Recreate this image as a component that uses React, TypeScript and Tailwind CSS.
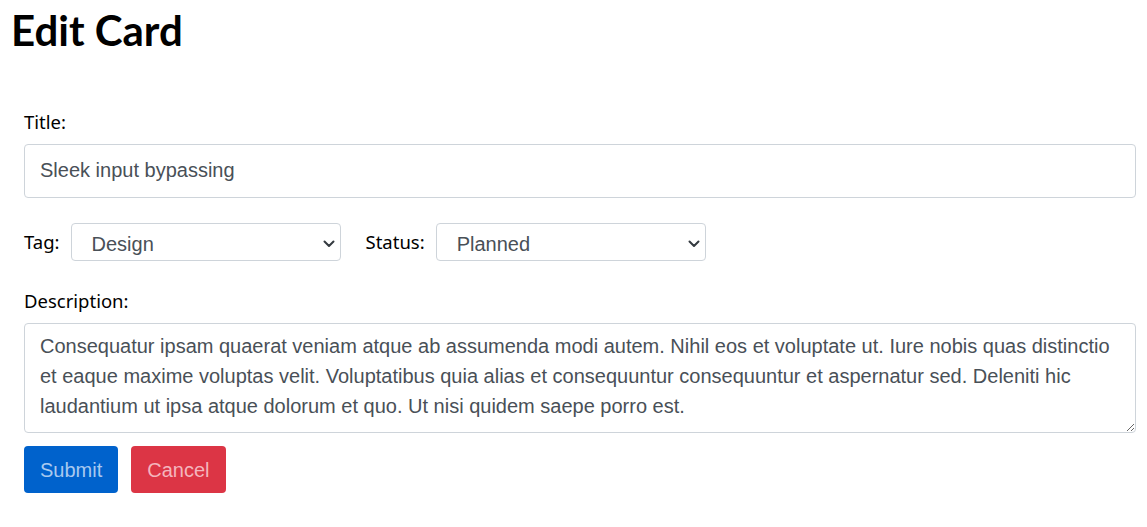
import { useState } from "react";

const labelFont = { fontFamily: '"Noto Sans", "Open Sans", sans-serif' };

function Chevron() {
    return (
        <svg width="12" height="8" viewBox="0 0 12 8" className="pointer-events-none absolute right-[6px] top-[17px]">
            <path d="M1.5 1.5 L6 6 L10.5 1.5" fill="none" stroke="#343a40" strokeWidth="2" strokeLinecap="round" strokeLinejoin="round" />
        </svg>
    );
}

function Select({ value, options, onChange }: { value: string; options: string[]; onChange: (v: string) => void }) {
    return (
        <div className="relative">
            <select
                value={value}
                onChange={e => onChange(e.target.value)}
                className="h-[38px] w-[270px] appearance-none rounded-[4px] border border-[#ced4da] bg-white pb-[1px] pl-[20px] pr-[28px] pt-[5px] text-[20px] leading-[30px] text-[#495057] outline-none font-['Liberation_Sans',Arial,sans-serif]"
            >
                {options.map(o => (
                    <option key={o} value={o}>{o}</option>
                ))}
            </select>
            <Chevron />
        </div>
    );
}

export default function App() {
    const [title, setTitle] = useState("Sleek input bypassing");
    const [tag, setTag] = useState("Design");
    const [status, setStatus] = useState("Planned");
    const [description, setDescription] = useState(
        "Consequatur ipsam quaerat veniam atque ab assumenda modi autem. Nihil eos et voluptate ut. Iure nobis quas distinctio et eaque maxime voluptas velit. Voluptatibus quia alias et consequuntur consequuntur et aspernatur sed. Deleniti hic laudantium ut ipsa atque dolorum et quo. Ut nisi quidem saepe porro est."
    );

    return (
        <div className="min-h-screen bg-white text-black">
            <h1 className="pl-[11px] pt-[4px] text-[42px] font-bold leading-[52px] font-['Lato',sans-serif]">Edit Card</h1>

            <form className="mt-[52px] flex flex-col px-[24px] pr-[11px]" style={labelFont} onSubmit={e => e.preventDefault()}>
                <label className="text-[18.5px] leading-[28px]">Title:</label>
                <input
                    value={title}
                    onChange={e => setTitle(e.target.value)}
                    className="mt-[8px] h-[54px] w-full rounded-[4px] border border-[#ced4da] px-[15px] pb-[2px] text-[20px] text-[#495057] outline-none font-['Liberation_Sans',Arial,sans-serif]"
                />

                <div className="mt-[25px] flex items-center">
                    <label className="mr-[11px] text-[18.5px]">Tag:</label>
                    <Select value={tag} options={["Design", "Feature", "Bug"]} onChange={setTag} />
                    <label className="ml-[25px] mr-[11px] text-[18.5px]">Status:</label>
                    <Select value={status} options={["Planned", "In Progress", "Live"]} onChange={setStatus} />
                </div>

                <label className="mt-[26px] text-[18.5px] leading-[28px]">Description:</label>
                <textarea
                    value={description}
                    onChange={e => setDescription(e.target.value)}
                    className="mt-[8px] h-[110px] w-full resize-y rounded-[4px] border border-[#ced4da] px-[15px] py-[7px] text-[20px] leading-[30px] text-[#495057] outline-none font-['Liberation_Sans',Arial,sans-serif]"
                />

                <div className="mt-[13px] flex gap-[13px] font-['Liberation_Sans',Arial,sans-serif]">
                    <button type="submit" className="h-[47px] rounded-[4px] bg-[#0062cc] px-[16px] text-[20px] text-[#a9c9ef]">
                        Submit
                    </button>
                    <button type="button" className="h-[47px] rounded-[4px] bg-[#dc3545] px-[16px] text-[20px] text-[#f4b5bd]">
                        Cancel
                    </button>
                </div>
            </form>
        </div>
    );
}
